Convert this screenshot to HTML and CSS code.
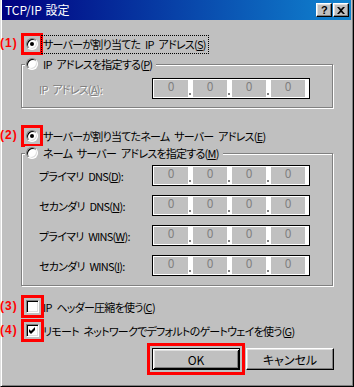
FILE: index.html
```html
<!DOCTYPE html>
<html lang="ja">

<head>
    <meta charset="utf-8">
    <title>TCP/IP 設定</title>
    <link rel="stylesheet" href="styles.css">
</head>

<body>
    <div class="window">
        <div class="titlebar">
            <span class="title">TCP/IP 設定</span>
            <span class="tbtn help">?</span>
            <span class="tbtn close">
                <svg width="8" height="7" viewBox="0 0 8 7"><path d="M0 0h2l2 2 2-2h2L5 3.5 8 7H6L4 5 2 7H0l3-3.5z" fill="#000"/></svg>
            </span>
        </div>

        <div class="content">
            <div class="opt r1">
                <span class="num">(1)</span>
                <span class="mark"><span class="radio on"></span></span>
                <span class="txt focus">サーバーが割り当てた IP アドレス(<u>S</u>)</span>
            </div>

            <div class="group g1">
                <div class="legend">
                    <span class="radio"></span>
                    <span class="txt">IP アドレスを指定する(<u>P</u>)</span>
                </div>
                <div class="field">
                    <label class="off">IP アドレス(<u>A</u>):</label>
                    <div class="ip"><span>0</span><i></i><span>0</span><i></i><span>0</span><i></i><span>0</span></div>
                </div>
            </div>

            <div class="opt r2">
                <span class="num">(2)</span>
                <span class="mark"><span class="radio on"></span></span>
                <span class="txt">サーバーが割り当てたネーム サーバー アドレス(<u>E</u>)</span>
            </div>

            <div class="group g2">
                <div class="legend">
                    <span class="radio"></span>
                    <span class="txt">ネーム サーバー アドレスを指定する(<u>M</u>)</span>
                </div>
                <div class="field">
                    <label>プライマリ DNS(<u>D</u>):</label>
                    <div class="ip"><span>0</span><i></i><span>0</span><i></i><span>0</span><i></i><span>0</span></div>
                </div>
                <div class="field">
                    <label>セカンダリ DNS(<u>N</u>):</label>
                    <div class="ip"><span>0</span><i></i><span>0</span><i></i><span>0</span><i></i><span>0</span></div>
                </div>
                <div class="field">
                    <label>プライマリ WINS(<u>W</u>):</label>
                    <div class="ip"><span>0</span><i></i><span>0</span><i></i><span>0</span><i></i><span>0</span></div>
                </div>
                <div class="field">
                    <label>セカンダリ WINS(<u>I</u>):</label>
                    <div class="ip"><span>0</span><i></i><span>0</span><i></i><span>0</span><i></i><span>0</span></div>
                </div>
            </div>

            <div class="opt r3">
                <span class="num">(3)</span>
                <span class="mark"><span class="check"></span></span>
                <span class="txt">IP ヘッダー圧縮を使う(<u>C</u>)</span>
            </div>

            <div class="opt r4">
                <span class="num">(4)</span>
                <span class="mark"><span class="check">
                    <svg width="7" height="7" viewBox="0 0 7 7"><polygon points="0,2 2,4 6,0 6,3 2,7 0,5" fill="#000"/></svg>
                </span></span>
                <span class="txt">リモート ネットワークでデフォルトのゲートウェイを使う(<u>G</u>)</span>
            </div>

            <div class="buttons">
                <button class="btn default">OK</button>
                <button class="btn">キャンセル</button>
            </div>
        </div>
    </div>
</body>

</html>
```

FILE: styles.css
```css
body { margin: 0; background: #c0c0c0; font-family: "Noto Sans CJK JP", sans-serif; font-size: 11px; letter-spacing: -0.75px; word-spacing: 3px; font-feature-settings: "palt"; color: #000; }
u { text-decoration: underline; text-underline-offset: 1px; }

.window { box-sizing: border-box; width: 354px; height: 387px; background: #c0c0c0; border: 1px solid; border-top: 0; border-color: #dfdfdf #000 #000 #dfdfdf; box-shadow: inset 1px 0 #fff, inset -1px -1px #808080; padding: 0 2px 2px 1px; }

.titlebar { display: flex; align-items: center; height: 20px; padding: 0 2px 0 3px; background: linear-gradient(to right, #000080, #1084d0); color: #fff; }
.title { flex: 1; line-height: 14px; font-size: 12px; letter-spacing: 0; word-spacing: 1px; }
.tbtn { box-sizing: border-box; width: 16px; height: 14px; display: flex; align-items: center; justify-content: center; background: #c0c0c0; border: 1px solid; border-color: #fff #000 #000 #fff; box-shadow: inset -1px -1px #808080, inset 1px 1px #dfdfdf; color: #000; }
.help { margin-right: 1px; font: bold 11px "Liberation Sans", sans-serif; }

.content { display: flex; flex-direction: column; }

.opt { display: flex; align-items: center; height: 14px; }
.num { width: 26px; margin-left: -2px; align-self: flex-start; margin-top: -1px; color: #f00; font: bold 12px "Liberation Sans", sans-serif; letter-spacing: 1px; }
.mark { display: flex; outline: 3px solid #f00; outline-offset: 2px; }
.txt { margin-left: 5px; line-height: 14px; white-space: nowrap; }
.focus { margin-left: 4px; padding: 1px 2px 2px 1px; outline: 1px dotted #000; }
.r1 { margin-top: 17px; }
.r2 { margin-top: 21px; }
.r3 { margin-top: 14px; height: 13px; }
.r4 { margin-top: 11px; height: 13px; }
.r3 .txt, .r4 .txt { margin-left: 4px; }

.radio { box-sizing: border-box; width: 12px; height: 12px; display: grid; place-items: center; border-radius: 50%; background: #fff; border: 1px solid; border-color: #808080 #fff #fff #808080; box-shadow: inset 1px 1px #000, inset -1px -1px #dfdfdf; }
.radio.on::after { content: ""; width: 4px; height: 4px; border-radius: 50%; background: #000; }
.check { box-sizing: border-box; width: 13px; height: 13px; display: grid; place-items: center; background: #fff; border: 1px solid; border-color: #808080 #fff #fff #808080; box-shadow: inset 1px 1px #000, inset -1px -1px #dfdfdf; }

.group { box-sizing: border-box; width: 312px; margin-left: 19px; border: 1px solid #808080; box-shadow: inset 1px 1px #fff, 1px 1px #fff; }
.g1 { margin-top: 13px; height: 44px; }
.g2 { margin-top: 10px; height: 133px; }
.legend { display: flex; align-items: center; align-self: flex-start; width: max-content; height: 14px; margin: -8px 0 0 3px; padding: 0 4px 0 1px; background: #c0c0c0; }
.legend .txt { margin-left: 5px; }
.g1 .field { margin-top: 7px; }
.g2 .field { margin-top: 9px; }
.g2 .field:nth-child(2) { margin-top: 5px; }

.field { display: flex; align-items: center; padding-left: 17px; }
.field label { width: 113px; white-space: nowrap; line-height: 14px; }
.field label.off { color: #808080; text-shadow: 1px 1px #fff; }

.ip { box-sizing: border-box; display: flex; width: 158px; height: 21px; padding: 1px 3px 1px 1px; border: 1px solid #000; background: #fff; }
.ip span { width: 34px; background: #c0c0c0; color: #808080; text-align: center; line-height: 11px; font-size: 12px; letter-spacing: 0; }
.ip i { width: 5px; background: linear-gradient(#808080, #808080) 1px 13px / 2px 2px no-repeat; }

.buttons { display: flex; gap: 6px; margin-top: 11px; padding-left: 150px; }
.btn { box-sizing: border-box; width: 88px; height: 22px; padding: 0; background: #c0c0c0; font: inherit; font-size: 12px; letter-spacing: 0; color: #000; border: 1px solid; border-color: #fff #000 #000 #fff; box-shadow: inset -1px -1px #808080, inset 1px 1px #dfdfdf; }
.btn.default { border-color: #000; box-shadow: inset 1px 1px #fff, inset -1px -1px #000, inset 2px 2px #dfdfdf, inset -2px -2px #808080; outline: 3px solid #f00; outline-offset: 2px; }
```
